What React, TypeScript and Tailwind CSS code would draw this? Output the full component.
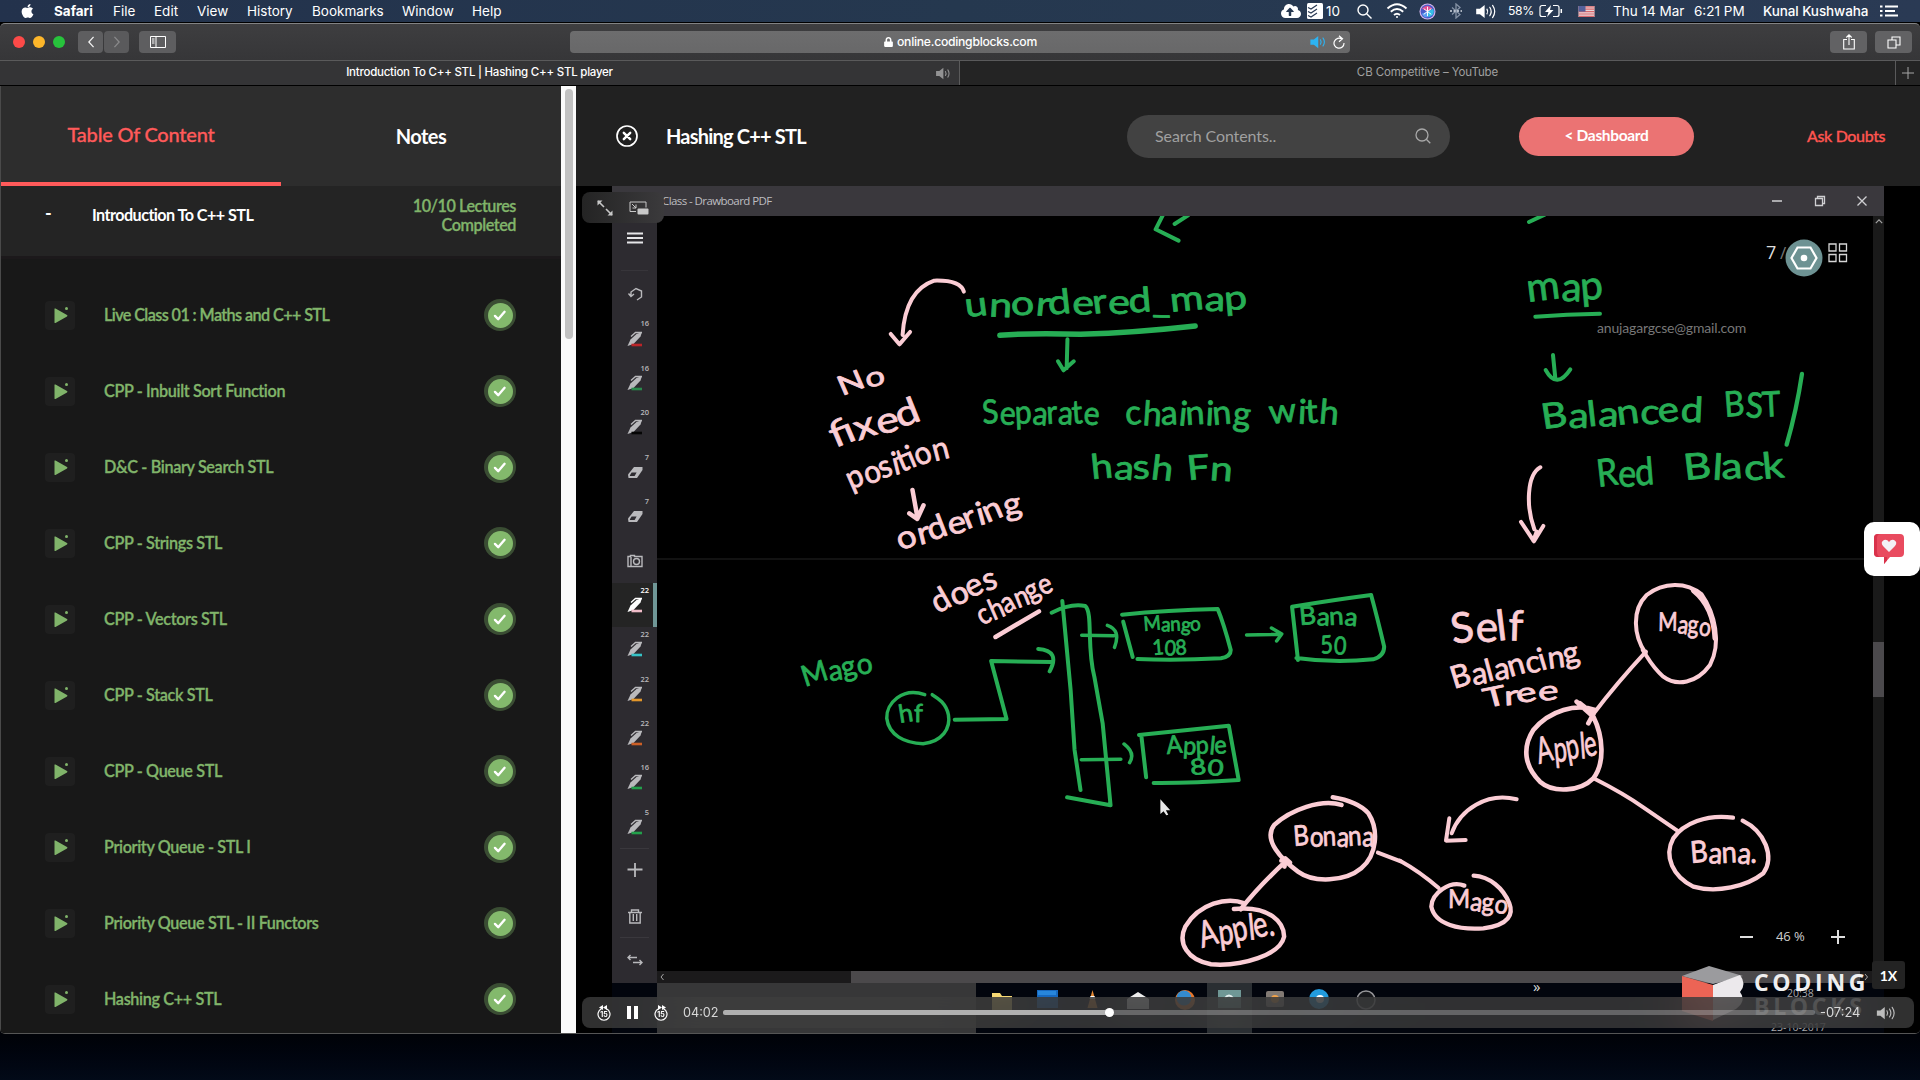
import React from "react";
import { FaApple, FaBluetoothB, FaCloudUploadAlt, FaLock } from "react-icons/fa";

const lectures = [
  "Live Class 01 : Maths and C++ STL",
  "CPP - Inbuilt Sort Function",
  "D&C - Binary Search STL",
  "CPP - Strings STL",
  "CPP - Vectors STL",
  "CPP - Stack STL",
  "CPP - Queue STL",
  "Priority Queue - STL I",
  "Priority Queue STL - II Functors",
  "Hashing C++ STL",
];

function Volume({ className, waves = 3 }: { className: string; waves?: number }) {
  return (
    <svg viewBox="0 0 22 16" className={className} fill="none" stroke="currentColor" strokeWidth="1.3" strokeLinecap="round">
      <path d="M0 5h4l5-4v14l-5-4H0z" fill="currentColor" stroke="none" />
      <path d="M11.5 5.5q1.6 2.5 0 5" />
      <path d="M14.5 3.5q3 4.5 0 9" />
      {waves > 2 && <path d="M17.500 1.500q4.500 6.500 0 13" />}
    </svg>
  );
}

function MenuBar() {
  return (
    <div className="flex h-[22px] shrink-0 items-center bg-linear-to-r from-[#23324c] via-[#25384f] to-[#2a3a54] text-[13.5px] text-white">
      <FaApple className="ml-[20px] h-[16px] w-[15px]" />
      <span className="ml-[19px] w-[59px] font-bold">Safari</span>
      <span className="w-[41px]">File</span>
      <span className="w-[43px]">Edit</span>
      <span className="w-[50px]">View</span>
      <span className="w-[65px]">History</span>
      <span className="w-[90px]">Bookmarks</span>
      <span className="w-[70px]">Window</span>
      <span>Help</span>
      <div className="ml-auto flex items-center">
        <FaCloudUploadAlt className="size-[20px]" />
        <svg viewBox="0 0 16 16" className="ml-[6px] size-[16px]">
          <rect width="16" height="16" rx="1.5" fill="#fff" />
          <path d="M1 4.500l3 1.500 6-4M1 8.500l3 1.500 6-4M1 12.500l3 1.500 6-4" stroke="#2a3a54" fill="none" strokeWidth="1.2" />
        </svg>
        <span className="ml-[3px] w-[31px]">10</span>
        <svg viewBox="0 0 15 15" className="size-[15px]" fill="none" stroke="white" strokeWidth="1.4">
          <circle cx="6" cy="6" r="5" />
          <path d="M9.700 9.700l4.800 4.800" />
        </svg>
        <svg viewBox="0 0 22 16" className="ml-[14px] h-[16px] w-[22px]" fill="none" stroke="white" strokeWidth="1.9">
          <path d="M1.500 5.500q9.500-8.500 19 0M4.800 8.800q6.200-5.500 12.400 0M8 12q3-2.500 6 0" />
          <circle cx="11" cy="14" r="1" fill="white" stroke="none" />
        </svg>
        <svg viewBox="0 0 18 18" className="ml-[11px] size-[17px]">
          <circle cx="9" cy="9" r="8.5" fill="#d5b6ea" />
          <circle cx="9" cy="9" r="7.3" fill="#4a5ac8" />
          <path d="M3 6q6-6 11 0l-4 3z" fill="#e14f94" />
          <path d="M15 6q3 6-5 9l-1-6z" fill="#36bfe6" />
          <path d="M3 11q2 5 6 4l1-6z" fill="#5b9bf0" />
          <path d="M9 4v10M5 6l8 6M13 6l-8 6" stroke="#fff" strokeWidth="1" fill="none" />
        </svg>
        <svg viewBox="0 0 12 16" className="ml-[14px] h-[16px] w-[12px]" fill="none" stroke="#8592a5" strokeWidth="1.3">
          <path d="M2 4.500l8 7-4 3.500V1l4 3.500-8 7" />
          <path d="M0 8h12" stroke="#d5dbe4" strokeWidth="1.5" strokeDasharray="2 1.500" />
        </svg>
        <Volume className="ml-[14px] h-[15px] w-[21px]" />
        <span className="ml-[11px] w-[31px] text-[12.2px] tracking-[-0.4px]">58%</span>
        <svg viewBox="0 0 24 14" className="h-[14px] w-[24px]" fill="none" stroke="white" strokeWidth="1.2">
          <path d="M7 1.500H3a2 2 0 0 0-2 2v7a2 2 0 0 0 2 2h4M14 1.500h4a2 2 0 0 1 2 2v7a2 2 0 0 1-2 2h-4" />
          <path d="M12 1L6 8h3.500L8 13l6.500-7H11z" fill="white" stroke="none" />
          <path d="M22.300 5v4" strokeWidth="1.5" />
        </svg>
        <svg viewBox="0 0 16 11" className="ml-[15px] h-[11px] w-[17px]">
          <rect width="16" height="11" fill="#e9d6d8" />
          <path d="M0 .8h16M0 3.200h16M0 5.600h16M0 8h16M0 10.300h16" stroke="#d9696e" strokeWidth="1.2" />
          <rect width="7" height="5.6" fill="#54609a" />
        </svg>
        <span className="ml-[18px] w-[81px] whitespace-pre">Thu 14 Mar</span>
        <span className="w-[69px] whitespace-nowrap">6:21 PM</span>
        <span className="w-[117px] whitespace-nowrap font-medium tracking-[-0.1px]">Kunal Kushwaha</span>
        <svg viewBox="0 0 18 12" className="mr-[22px] h-[12px] w-[18px]" stroke="white" strokeWidth="1.8">
          <path d="M0 1.500h2.500M0 6h2.500M0 10.500h2.500M5 1.500h13M5 6h10M5 10.500h13" />
        </svg>
      </div>
    </div>
  );
}

function BrowserChrome() {
  return (
    <>
      <div className="flex h-[37px] shrink-0 items-center rounded-t-[5px] border-t border-[#828384] bg-linear-to-b from-[#3e3e40] to-[#363638] text-white">
        <div className="ml-[13px] flex gap-[8px]">
          <i className="size-[12px] rounded-full bg-[#fc4a48]" />
          <i className="size-[12px] rounded-full bg-[#fdb62a]" />
          <i className="size-[12px] rounded-full bg-[#27c33c]" />
        </div>
        <div className="ml-[13px] flex gap-[1px]">
          <div className="grid h-[22px] w-[25px] place-items-center rounded-[4px] bg-[#5e5e60]">
            <svg viewBox="0 0 8 14" className="h-[12px] w-[8px]" fill="none" stroke="#f0f0f0" strokeWidth="1.5"><path d="M7 1L1.500 7 7 13" /></svg>
          </div>
          <div className="grid h-[22px] w-[25px] place-items-center rounded-[4px] bg-[#5a5a5c]">
            <svg viewBox="0 0 8 14" className="h-[12px] w-[8px]" fill="none" stroke="#89898b" strokeWidth="1.5"><path d="M1 1l5.500 6L1 13" /></svg>
          </div>
        </div>
        <div className="ml-[10px] grid h-[22px] w-[37px] place-items-center rounded-[4px] bg-[#5e5e60]">
          <svg viewBox="0 0 16 12" className="h-[12px] w-[16px]" fill="none" stroke="white" strokeWidth="1"><path d="M.5.500h15v11H.500zM6 .5v11M2 3h2.500M2 5h2.500M2 7h2.500" /></svg>
        </div>
        <div className="relative ml-[394px] flex h-[22px] w-[780px] items-center rounded-[4px] bg-linear-to-b from-[#6d6d6e] to-[#686869]">
          <FaLock className="ml-[314px] h-[10px] w-[9px]" />
          <span className="ml-[4px] text-[12.2px] font-medium tracking-[-0.27px]">online.codingblocks.com</span>
          <Volume waves={2} className="absolute right-[20px] h-[14px] w-[20px] text-[#2db3f2]" />
          <svg viewBox="0 0 12 14" className="absolute right-[5px] h-[14px] w-[12px]" fill="none" stroke="white" strokeWidth="1.2">
            <path d="M9 4.200A5 5 0 1 0 11 8M6 .8l3.500 3-3.500 3" />
          </svg>
        </div>
        <div className="ml-auto grid h-[22px] w-[37px] place-items-center rounded-[4px] bg-[#626264]">
          <svg viewBox="0 0 12 16" className="h-[16px] w-[12px]" fill="none" stroke="white" strokeWidth="1.1"><path d="M4 5.500H.7v9.500h10.600V5.500H8M6 11V1M3.300 3.500L6 .8l2.700 2.700" /></svg>
        </div>
        <div className="mr-[8px] ml-[8px] grid h-[22px] w-[37px] place-items-center rounded-[4px] bg-[#626264]">
          <svg viewBox="0 0 14 13" className="h-[13px] w-[14px]" fill="none" stroke="white" strokeWidth="1.1"><path d="M1 4h8v8H1zM5 3.500V1h8v8H9.500" /></svg>
        </div>
      </div>
      <div className="flex h-[26px] shrink-0 border-t border-b border-t-[#5a5a5b] border-b-black text-[11.5px]">
        <div className="relative flex w-[960px] items-center justify-center border-r border-[#5a5a5b] bg-[#343436] text-white">
          <span className="font-medium tracking-[-0.24px]">Introduction To C++ STL | Hashing C++ STL player</span>
          <Volume waves={2} className="absolute right-[4px] h-[13px] w-[20px] text-[#929293]" />
        </div>
        <div className="flex flex-1 items-center justify-center bg-[#242424] tracking-[-0.1px] text-[#a0a0a0]">CB Competitive – YouTube</div>
        <div className="grid w-[25px] place-items-center border-l border-[#5a5a5b] bg-[#242424]">
          <svg viewBox="0 0 12 12" className="size-[12px]" stroke="#a5a5a5"><path d="M6 0v12M0 6h12" /></svg>
        </div>
      </div>
    </>
  );
}

function Sidebar() {
  return (
    <aside className="flex w-[576px] shrink-0 border-l border-[#4a4a4a]">
      <div className="flex w-[560px] flex-col bg-[#181818]">
        <div className="flex h-[100px] shrink-0 bg-[#2d2d2d] text-[20px]">
          <div className="flex w-[280px] items-center justify-center border-b-4 border-[#ff5a5a] text-[#ff5a5a]"><span className="font-medium tracking-[-0.22px] [-webkit-text-stroke:0.3px]">Table Of Content</span></div>
          <div className="flex flex-1 items-center justify-center font-bold tracking-[-0.5px] text-white">Notes</div>
        </div>
        <div className="flex h-[70px] shrink-0 items-center bg-[#242424] pb-[2px] font-semibold">
          <span className="mt-[-14px] ml-[44px] w-[47px] text-[18px] font-bold text-white">-</span>
          <span className="mt-[-9px] text-[16.2px] font-bold tracking-[-0.57px] text-white">Introduction To C++ STL</span>
          <span className="mt-[-11px] mr-[45px] ml-auto w-[110px] text-right text-[16.2px] leading-[19px] font-semibold tracking-[-0.45px] text-[#80b46a] [-webkit-text-stroke:0.3px]">10/10 Lectures Completed</span>
        </div>
        <div className="h-[3px] shrink-0 bg-[#1c191b]" />
        <ul className="flex flex-col pt-[18px]">
          {lectures.map((t, i) => (
            <li key={t} className="flex h-[76px] items-center">
              <div className="ml-[44px] grid h-[29px] w-[30px] place-items-center rounded-[4px] bg-[#1f1f1f]">
                <svg viewBox="0 0 30 30" className="size-[30px]" fill="#80b46a">
                  <path d="M9.500 8.500q-.5-1.500 1-1l11.500 6.500q1 .8 0 1.600L10.500 22q-1 .4-1-.8z" />
                  <circle cx="21.5" cy="7.5" r="1.5" />
                </svg>
              </div>
              <span className={i === 0 ? "ml-[29px] text-[16.2px] font-semibold tracking-[-0.6px] text-[#80b46a] [-webkit-text-stroke:0.3px]" : "ml-[29px] text-[16.2px] font-semibold tracking-[-0.35px] text-[#80b46a] [-webkit-text-stroke:0.3px]"}>{t}</span>
              <div className="mr-[45px] ml-auto grid size-[32px] place-items-center rounded-full bg-[#3a4d33]">
                <div className="grid size-[25px] place-items-center rounded-full bg-[#83b96c]">
                  <svg viewBox="0 0 14 12" className="h-[11px] w-[14px]" fill="none" stroke="white" strokeWidth="2.6" strokeLinecap="round" strokeLinejoin="round"><path d="M1.500 6.500l3.500 3.500 7-8" /></svg>
                </div>
              </div>
            </li>
          ))}
        </ul>
      </div>
      <div className="w-[15px] bg-[#fafafa] pt-[3px]">
        <div className="ml-[4px] h-[250px] w-[8px] rounded-full bg-[#c1c1c1]" />
      </div>
    </aside>
  );
}

function PlayerHeader() {
  return (
    <header className="flex h-[100px] shrink-0 items-center bg-[#212121]">
      <svg viewBox="0 0 22 22" className="ml-[40px] size-[22px]" fill="none" stroke="white" strokeLinecap="round">
        <circle cx="11" cy="11" r="10" strokeWidth="1.7" />
        <path d="M7.800 7.800l6.400 6.400M14.200 7.800l-6.400 6.400" strokeWidth="2.4" />
      </svg>
      <h1 className="ml-[28px] text-[20px] font-bold tracking-[-0.8px] text-white">Hashing C++ STL</h1>
      <div className="mr-[69px] ml-auto flex h-[43px] w-[323px] items-center justify-between rounded-full bg-[#424242] pr-[19px] pl-[28px]">
        <span className="text-[16px] tracking-[-0.1px] text-[#a0a0a0]">Search Contents..</span>
        <svg viewBox="0 0 16 16" className="size-[16px]" fill="none" stroke="#a8a8a8" strokeWidth="1.3"><circle cx="7" cy="7" r="6" /><path d="M11.300 11.300l4 4" /></svg>
      </div>
      <button className="h-[39px] w-[175px] rounded-full bg-[#eb7373] text-[15.5px] font-bold tracking-[-0.35px] text-white">&lt; Dashboard</button>
      <a className="mr-[35px] ml-[113px] w-[78px] text-[16px] font-medium tracking-[-0.37px] whitespace-nowrap text-[#ff5550] [-webkit-text-stroke:0.3px]">Ask Doubts</a>
    </header>
  );
}

function Tool({ n, color, kind = "pen", active = false, line = false }: { n?: number; color?: string; kind?: string; active?: boolean; line?: boolean }) {
  return (
    <div className={active ? "relative grid h-[44.4px] shrink-0 place-items-center border-r-4 border-[#6f9696] bg-[#242424] pl-[4px] text-white" : "relative grid h-[44.4px] shrink-0 place-items-center text-[#b9b9bc]"}>
      {line && <div className="absolute top-[-1px] left-[8px] h-px w-[29px] bg-[#3a383d]" />}
      {n !== undefined && <span className={active ? "absolute top-[2px] right-[4px] text-[7.5px] font-semibold" : "absolute top-[2px] right-[8px] text-[7.5px] font-semibold"}>{n}</span>}
      <svg viewBox="0 0 16 16" className="size-[16px]" fill="none" stroke="currentColor" strokeWidth="1.4">
        {kind === "pen" && (
          <>
            <path d="M.5 15L3.500 8.500 9.500 3l5.500-2-1.500 4.500L6.500 13z" fill="currentColor" stroke="none" />
            <path d="M4 5.500L8.500 1.500H15" />
            <path d="M4.500 14h10.500" stroke={color} strokeWidth="2.6" />
          </>
        )}
        {kind === "eraser" && (
          <>
            <path d="M1 10.500L7 3h8.500v3l-5.500 8H1.500z" fill="currentColor" stroke="none" />
            <path d="M2.800 11.500l1.800-3h5l-2 3.500H3z" fill="#2d2b30" stroke="none" />
          </>
        )}
        {kind === "undo" && <path d="M4 10V6l5-3.500L14.500 5v6L10 14M1.500 7.500L4 10.500l3-2.500" />}
        {kind === "camera" && (
          <>
            <path d="M1 3.500h2.500V2.500h4v1H15v10H1zM4 4v9" />
            <circle cx="9.5" cy="8.5" r="3" />
          </>
        )}
        {kind === "plus" && <path d="M8-1v15M.5 6.500h15" strokeWidth="1.8" />}
        {kind === "trash" && <path d="M1 4.500h14M4.500 4V2h7v2M2.800 4.500V15h10.400V4.500M6.300 6v7M9.700 6v7" />}
        {kind === "swap" && <path d="M1 5.500h9M3.500 3L1 5.500 3.500 8M6 10.500h9M12.500 8l2.500 2.500-2.500 2.500" />}
      </svg>
    </div>
  );
}

const GREEN = "#27ae55";
const PINK = "#fbcdd5";

type Word = [string, number, number, number, number, number, string];

/* text, x, baseline, width, size, tilt, colour */
const words: Word[] = [
  ["unordered_map", 966, 317, 282, 34, -1.500, GREEN],
  ["No", 842, 396, 46, 27, -17, PINK],
  ["fixed", 835, 448, 92, 36, -17, PINK],
  ["position", 851, 490, 105, 32, -19, PINK],
  ["ordering", 901, 551, 128, 32, -18, PINK],
  ["Separate", 983, 424, 116, 33, 0, GREEN],
  ["chaining", 1126, 425, 124, 34, 0, GREEN],
  ["with", 1270, 424, 68, 34, -1, GREEN],
  ["hash", 1092, 479, 80, 34, 0, GREEN],
  ["Fn", 1188, 480, 44, 34, 0, GREEN],
  ["map", 1528, 302, 76, 40, -2, GREEN],
  ["Balanced", 1543, 429, 160, 35, -3, GREEN],
  ["BST", 1725, 417, 56, 35, 0, GREEN],
  ["Red", 1598, 487, 57, 38, -2, GREEN],
  ["Black", 1685, 480, 100, 36, -1, GREEN],
  ["does", 938, 614, 67, 32, -25, PINK],
  ["change", 983, 626, 80, 29, -27, PINK],
  ["Mago", 805, 687, 70, 29, -13, GREEN],
  ["hf", 900, 723, 23, 25, -4, GREEN],
  ["Mango", 1144, 631, 57, 20, 0, GREEN],
  ["108", 1153, 655, 34, 21, 0, GREEN],
  ["Bana", 1300, 625, 57, 25, 0, GREEN],
  ["50", 1321, 654, 25, 25, 0, GREEN],
  ["Apple", 1167, 754, 60, 25, 0, GREEN],
  ["80", 1191, 775, 32, 22, 0, GREEN],
  ["Bonana", 1294, 846, 80, 28, 0, PINK],
  ["Apple.", 1202, 948, 75, 36, -10, PINK],
  ["Self", 1453, 644, 70, 42, -4, PINK],
  ["Balancing", 1454, 689, 130, 31, -12, PINK],
  ["Tree", 1486, 708, 73, 27, -8, PINK],
  ["Mago", 1658, 631, 52, 26, 5, PINK],
  ["Apple", 1539, 764, 60, 36, -8, PINK],
  ["Bana.", 1691, 863, 66, 30, 0, PINK],
  ["Mago", 1448, 908, 59, 26, 5, PINK],
];

function Whiteboard() {
  return (
    <svg viewBox="657 216 1216 755" className="block h-[755px] w-[1216px] bg-black" fill="none" strokeLinecap="round" strokeLinejoin="round">
      <path d="M657 559h1216" stroke="#121212" strokeWidth="2" />
      {words.map(([t, x, y, w, s, a, c], i) => (
        <text key={i} x={x} y={y} rotate="-5 4 -3 6 -4 3 -5 5 -3 4 -4 3 -3" textLength={w} lengthAdjust="spacingAndGlyphs" fontSize={s} fill={c} stroke={c} strokeWidth="0.8" transform={`rotate(${a} ${x} ${y})`} className="font-['Lato',sans-serif]">
          {t}
        </text>
      ))}

      <g transform="translate(780 200) scale(.3954 .3333)" strokeWidth="4">
        <g stroke={GREEN} className="[&>path]:[vector-effect:non-scaling-stroke]">
          <path d="M968 46L950 88 1008 122M1032 46L998 72" />
          <path d="M556 406Q640 398 760 403 900 398 1050 378" strokeWidth="5.5" />
          <path d="M727 418L725 505M703 484L717 511 743 484" />
        </g>
        <g stroke={PINK} className="[&>path]:[vector-effect:non-scaling-stroke]">
          <path d="M465 275Q456 240 390 242C345 260 315 310 310 405M280 402L302 433 329 396" />
          <path d="M335 870L348 955M327 940L347 957 363 916" strokeWidth="4.5" />
        </g>
      </g>

      <g transform="translate(1400 190) scale(.3333)" strokeWidth="12">
        <g stroke={GREEN}>
          <path d="M387 96L434 74" />
          <path d="M406 380Q500 372 600 371" />
          <path d="M459 495L466 565M437 540Q470 600 511 538" />
          <path d="M1206 552Q1190 660 1160 764" strokeWidth="13" />
        </g>
        <path d="M421 832C380 855 378 950 403 1018M363 996L402 1054 430 1008M400 1052L410 1025" stroke={PINK} />
      </g>

      <g transform="translate(780 550) scale(.3954 .3333)" strokeWidth="4">
        <g stroke={GREEN} className="[&>path]:[vector-effect:non-scaling-stroke]">
          <path d="M366 434C310 410 268 460 270 505 275 555 315 580 362 581 410 575 432 535 426 495 420 460 400 445 385 434" strokeWidth="3.5" />
          <path d="M442 509L573 507 534 333 687 336M653 297Q710 302 682 364" />
          <path d="M714 153L735 420 745 600 760 720M687 188C725 165 750 163 772 168 792 190 775 290 795 380L816 520 836 766 726 742" />
          <path d="M763 256L845 257M828 226Q863 240 846 292M762 629L862 628M870 582Q900 610 884 638" strokeWidth="3.5" />
          <path d="M868 215L892 321M865 194Q980 180 1107 177 1122 220 1140 300 1140 320 1115 325 1000 332 904 327" />
          <path d="M1180 255L1267 253M1243 234L1269 252 1256 273" strokeWidth="3.5" />
          <path d="M1310 330L1295 170Q1400 150 1495 135 1510 200 1528 290 1528 318 1500 328 1400 340 1306 324" />
          <path d="M926 682L914 558M908 555L1135 527 1160 690 Q1040 700 945 699" />
        </g>
        <g stroke={PINK} className="[&>path]:[vector-effect:non-scaling-stroke]">
          <path d="M545 261L655 184" strokeWidth="4.5" />
          <path d="M1420 765C1370 745 1290 780 1250 825 1220 870 1270 930 1310 965 1350 1000 1430 995 1470 955 1510 915 1515 840 1488 790 1465 760 1430 748 1398 742" strokeWidth="4.5" />
          <path d="M1268 932L1290 938 1278 925 1276 950M1278 935Q1210 1010 1165 1078" strokeWidth="4.5" />
          <path d="M1148 1077C1240 1065 1275 1120 1275 1160 1265 1215 1170 1250 1090 1243 1030 1230 1005 1180 1025 1130 1060 1060 1130 1040 1175 1060" strokeWidth="4.5" />
          <path d="M1512 908L1570 934" />
        </g>
        <path d="M962 748v44l8-8 7 12 5-2-6-13h11z" fill="#e8e8e8" />
      </g>

      <g transform="translate(1400 560) scale(.3333)" strokeWidth="12" stroke={PINK}>
        <path d="M737 280C700 225 695 150 740 105 790 65 860 65 905 103 945 160 965 250 930 315 890 370 830 380 790 350 755 320 745 295 728 270" />
        <path d="M880 92Q940 140 945 235" strokeWidth="15" />
        <path d="M738 275Q650 370 580 462" />
        <path d="M585 450C530 430 450 450 400 510 365 565 375 620 420 665 460 700 540 695 580 655 615 610 610 530 580 470L530 425M540 430L580 462 565 490" strokeWidth="14" />
        <path d="M585 657Q670 700 730 742L832 812" />
        <path d="M999 773C920 762 850 790 820 835 790 890 820 950 880 980 950 1000 1040 980 1090 940 1125 890 1095 815 1028 782" strokeWidth="13" />
        <path d="M350 718C260 695 180 750 155 820M148 775L138 842 197 840" />
        <path d="M0 902Q60 935 116 984" />
        <path d="M193 977C150 960 95 1000 94 1040 105 1095 180 1110 250 1105 330 1095 340 1060 328 1030 310 985 270 950 221 947" strokeWidth="13" />
      </g>
    </svg>
  );
}

function Skip({ back = false }: { back?: boolean }) {
  return (
    <div className="relative grid h-[16px] w-[14px] place-items-center text-white">
      <svg viewBox="0 0 14 16" className={back ? "absolute h-[16px] w-[14px]" : "absolute h-[16px] w-[14px] -scale-x-100"} fill="none" stroke="white" strokeWidth="1.2">
        <path d="M4.500 3.800A6 6 0 1 0 9.500 3.800" />
        <path d="M6 0v5L2 2.500zM10 0v5L6 2.500z" fill="white" stroke="none" />
      </svg>
      <span className="mt-[3px] text-[7px] leading-none font-bold">15</span>
    </div>
  );
}

function Taskbar() {
  return (
    <div className="flex h-[51px] shrink-0 bg-[#02050d]">
      <div className="w-[45px]" />
      <div className="w-[319px] bg-[#373738]" />
      <svg viewBox="976 983 908 51" className="h-[51px] w-[908px] overflow-visible">
        <path d="M1207 983h45v51h-45z" fill="#2a2e32" />
        <path d="M992 993h8l2 3h10v14h-20z" fill="#f6d873" />
        <path d="M1037 990h21v18h-21z" fill="#1668c0" />
        <path d="M1038 991h18v4h-18z" fill="#2786dc" />
        <path d="M1092.500 990l5 18h-10z" fill="#e98b35" />
        <path d="M1090.500 996h4l1 3h-6z" fill="#fff" />
        <path d="M1127 999l11-7 11 7v10h-22z" fill="#ededed" />
        <circle cx="1185" cy="1000" r="10" fill="#e8762a" />
        <circle cx="1184" cy="998" r="7.5" fill="#348bcf" />
        <path d="M1218 990h23v18h-23z" fill="#6f9795" />
        <path d="M1225 998q4-5 8 0" stroke="#e2eeee" strokeWidth="2" fill="none" />
        <rect x="1266" y="991" width="18" height="16" rx="2" fill="#827a74" />
        <circle cx="1275" cy="999" r="4" fill="#f0a24b" />
        <circle cx="1319" cy="999" r="10" fill="#229bdd" />
        <circle cx="1320" cy="999" r="4" fill="#fff" />
        <circle cx="1366" cy="1000" r="9" fill="#17181c" stroke="#969699" strokeWidth="1.5" />
        <text x="1533" y="992" fontSize="15" fill="#ddd">»</text>
        <text x="1787" y="997" fontSize="10.5" fill="#a8a8aa">20:38</text>
        <text x="1771" y="1031" fontSize="10.5" fill="#a8a8aa">23-10-2017</text>
      </svg>
    </div>
  );
}

function Video() {
  return (
    <section className="relative flex h-[848px] overflow-hidden bg-black pl-[36px]">
      <div className="flex w-[1272px] flex-col font-['Open_Sans',sans-serif]">
        <div className="flex h-[30px] shrink-0 items-center bg-[#3a383d] text-[#bdbdc0]">
          <span className="ml-[50px] text-[11.5px] tracking-[-0.58px]">Class - Drawboard PDF</span>
          <svg viewBox="0 0 96 12" className="mr-[16px] ml-auto h-[12px] w-[96px]" fill="none" stroke="#cfcfd2" strokeWidth="1.3">
            <path d="M0 6h10M43.500 3.500h7v7h-7zM45.500 3.500v-2h7v7h-2M85.500 1.500l9 9M94.500 1.500l-9 9" />
          </svg>
        </div>
        <div className="flex h-[767px] shrink-0">
          <div className="flex w-[45px] shrink-0 flex-col overflow-hidden bg-[#2d2b30]">
            <div className="flex h-[56px] shrink-0 flex-col items-center">
              <svg viewBox="0 0 16 12" className="mt-[16px] h-[12px] w-[16px]" stroke="#e6e6e8" strokeWidth="2"><path d="M0 1.500h16M0 6h16M0 10.500h16" /></svg>
              <div className="mt-[26px] h-px w-[27px] bg-[#37353a]" />
            </div>
            <Tool kind="undo" />
            <Tool n={16} color="#bb2428" />
            <Tool n={16} color="#2a8a4c" />
            <Tool n={20} color="#050505" />
            <Tool n={7} kind="eraser" />
            <Tool n={7} kind="eraser" />
            <Tool kind="camera" />
            <Tool n={22} color="#f0bcc8" active />
            <Tool n={22} color="#35c3c6" />
            <Tool n={22} color="#e3962a" />
            <Tool n={22} color="#cc5f26" />
            <Tool n={16} color="#22a04b" />
            <Tool n={5} color="#22a04b" />
            <Tool kind="plus" line />
            <Tool kind="trash" />
            <Tool kind="swap" line />
          </div>
          <div className="flex flex-col">
            <Whiteboard />
            <div className="flex h-[12px] bg-[#1b1a1b]">
              <svg viewBox="0 0 12 12" className="h-[12px] w-[12px]" fill="none" stroke="#a5a5a5"><path d="M6.500 3L4 6l2.500 3" /></svg>
              <div className="ml-[182px] w-[1009px] bg-[#4b494b]" />
              <svg viewBox="0 0 12 12" className="h-[12px] w-[12px]" fill="none" stroke="#a5a5a5"><path d="M5 3l2.500 3L5 9" /></svg>
            </div>
          </div>
          <div className="flex flex-1 flex-col items-center bg-[#1a1a1a]">
            <svg viewBox="0 0 10 6" className="mt-[3px] h-[5px] w-[8px]" fill="none" stroke="#a5a5a5" strokeWidth="1.5"><path d="M1 5l4-4 4 4" /></svg>
            <div className="mt-[418px] h-[55px] w-full bg-[#4b494c]" />
          </div>
        </div>
        <Taskbar />
      </div>

      <div className="absolute top-[57px] left-[1190px] flex items-center text-[#dcdcdc]">
        <span className="w-[14px] font-['Open_Sans',sans-serif] text-[18px] leading-none">7</span>
        <span className="font-['Open_Sans',sans-serif] text-[17px] leading-none text-[#777]">/</span>
      </div>
      <svg viewBox="0 0 66 38" className="absolute top-[53px] left-[1209px] h-[38px] w-[66px]" fill="none">
        <circle cx="19" cy="19" r="18.5" fill="#6d9293" />
        <path d="M12.500 8.500h13l6 10.500-6 10.500h-13L6.500 19z" stroke="#fff" strokeWidth="2.2" />
        <circle cx="19" cy="19" r="3.3" fill="#fff" />
        <path d="M44 5h7v7h-7zM54.500 5h7v7h-7zM44 15.500h7v7h-7zM54.500 15.500h7v7h-7z" stroke="#d6d6d6" strokeWidth="1.3" />
      </svg>
      <span className="absolute top-[131px] left-[1021px] text-[14px] tracking-[-0.17px] text-[#777]">anujagargcse@gmail.com</span>
      <div className="absolute top-[741px] left-[1164px] flex items-center font-['Open_Sans',sans-serif] text-[13px] text-[#cfcfcf]">
        <i className="h-[2px] w-[13px] bg-[#dedede]" />
        <span className="ml-[23px] w-[55px] tracking-[-0.1px]">46 %</span>
        <svg viewBox="0 0 14 14" className="size-[14px]" stroke="#dedede" strokeWidth="2"><path d="M7 0v14M0 7h14" /></svg>
      </div>

      <div className="absolute top-[780px] left-[1106px] flex">
        <svg viewBox="0 0 62 60" className="h-[60px] w-[62px]">
          <path d="M27 0L61 10 31 18 0 10z" fill="#9b9b9e" />
          <path d="M0 10l31 9v36L0 45z" fill="#ec6455" />
          <path d="M31 19L58 9q7 9 0 17 7 9-4 17L31 54z" fill="#ece9ec" />
        </svg>
        <div className="ml-[10px] pt-[4px] font-['Open_Sans',sans-serif] text-[23px] leading-[24px] font-bold tracking-[3.7px] text-[#efeff0]">
          <div>CODING</div>
          <div>BLOCKS</div>
        </div>
      </div>

      <div className="absolute top-[6px] left-[6px] flex h-[31px] w-[82px] items-center rounded-[8px] bg-linear-to-r from-[#242424] to-[#3b3a3c]">
        <svg viewBox="0 0 16 16" className="ml-[15px] size-[16px]" fill="#c8c8c8" stroke="#c8c8c8">
          <path d="M1 1l6 6M9 9l6 6" strokeWidth="1.6" />
          <path d="M.5.500h5l-5 5zM15.500 15.500h-5l5-5z" stroke="none" />
        </svg>
        <svg viewBox="0 0 20 14" className="ml-[16px] h-[14px] w-[20px]" fill="none" stroke="#c8c8c8">
          <path d="M7 10.500H1V1h16v5.500M3 3l4 4M7 3.500V7H3.500" />
          <rect x="8.5" y="7.5" width="11" height="6" rx="1" fill="#c8c8c8" stroke="none" />
        </svg>
      </div>

      <div className="absolute top-[811px] left-[6px] flex h-[31px] w-[1332px] items-center rounded-[8px] bg-[rgba(62,62,62,0.78)] font-['Inter',sans-serif] backdrop-blur-xl">
        <div className="ml-[15px] flex items-center">
          <Skip back />
          <div className="ml-[16px] flex w-[11px] justify-between"><i className="h-[13px] w-[4px] bg-white" /><i className="h-[13px] w-[4px] bg-white" /></div>
          <div className="ml-[16px]"><Skip /></div>
        </div>
        <span className="ml-[15px] w-[40px] text-[12.7px] text-[#d8d8d8]">04:02</span>
        <div className="flex h-[5px] w-[1092px] items-center rounded-full bg-white/25">
          <div className="h-[5px] w-[387px] rounded-full bg-[#b0b0b0]" />
          <i className="-ml-[5px] size-[9px] rounded-full bg-white" />
        </div>
        <span className="ml-[5px] w-[56px] text-[12.9px] text-[#d8d8d8]">-07:24</span>
        <Volume className="h-[14px] w-[21px] text-[#bcbcbc]" />
      </div>

      <div className="absolute top-[775px] left-[1296px] grid h-[28px] w-[33px] place-items-center rounded-[3px] bg-[#232323] text-[14px] font-bold text-white">1X</div>

      <div className="absolute top-[336px] left-[1288px] h-[54px] w-[56px] rounded-[10px] bg-white">
        <svg viewBox="0 0 30 30" className="mt-[12px] ml-[10px] size-[30px]">
          <path d="M4 0h22q4 0 4 4v15q0 4-4 4H16l-6 7v-7H4q-4 0-4-4V4q0-4 4-4z" fill="#e94b5f" />
          <path d="M4 0Q0 0 0 4v15q0 4 4 4h6v7l3-3.500V23H8q-5 0-5-5V4q0-4 4-4z" fill="#d9324b" />
          <path d="M15 18L9 12q-3-4 1-6 3-1 5 2 2-3 5-2 4 2 1 6z" fill="#f3f0f5" />
        </svg>
      </div>
    </section>
  );
}

export default function App() {
  return (
    <div className="flex h-[1080px] w-[1920px] flex-col overflow-hidden bg-linear-to-b from-[#000208] from-96% to-[#020a18] font-['Inter',sans-serif]">
      <MenuBar />
      <div className="flex h-[1012px] shrink-0 flex-col overflow-hidden rounded-b-[5px] border-t border-b border-t-black border-b-[#555] bg-black">
        <BrowserChrome />
        <div className="flex min-h-0 flex-1 font-['Lato',sans-serif]">
          <Sidebar />
          <main className="flex w-[1344px] shrink-0 flex-col">
            <PlayerHeader />
            <Video />
          </main>
        </div>
      </div>
    </div>
  );
}
